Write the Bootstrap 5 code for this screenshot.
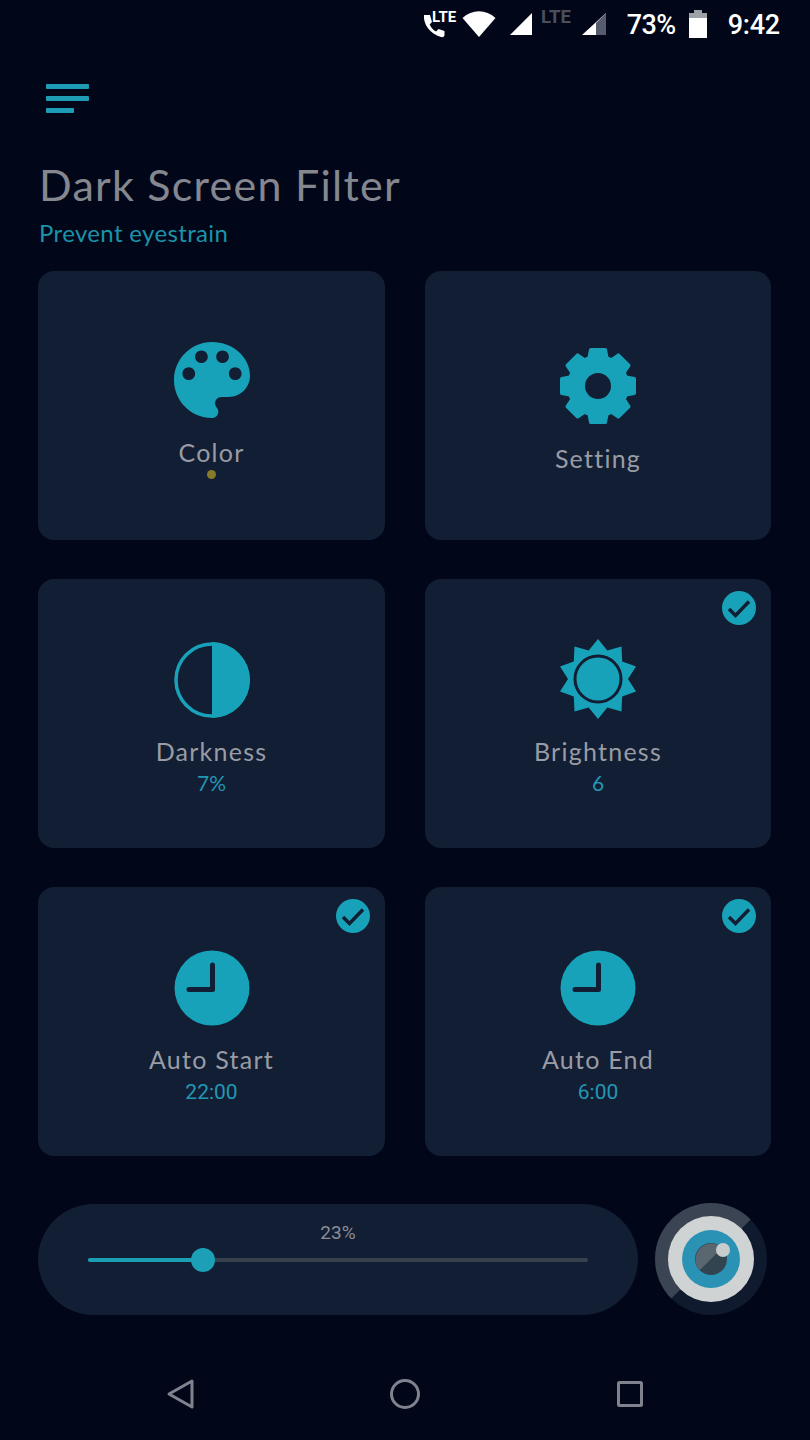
<!DOCTYPE html>
<html lang="en">
<head>
<meta charset="utf-8">
<title>Dark Screen Filter</title>
<meta name="viewport" content="width=device-width, initial-scale=1">
<link href="https://cdn.jsdelivr.net/npm/bootstrap@5.3.0/dist/css/bootstrap.min.css" rel="stylesheet">
<style>
html,body{background:#010618;margin:0;}
.phone-screen{width:810px;height:1440px;overflow:hidden;background:#010618;font-family:"Lato",sans-serif;}
.status-row{height:48px;padding-right:30px;color:#fff;font-family:"Roboto",sans-serif;}
.status-row svg{display:block;overflow:visible;}
.st-pct{font-size:27px;font-weight:500;line-height:1;margin-left:21px;margin-top:2px;letter-spacing:-.6px;}
.st-time{font-size:27px;font-weight:500;line-height:1;margin-left:21px;margin-top:2px;letter-spacing:-.2px;}
.menu-glyph{margin:36px 0 0 46px;width:43px;}
.menu-glyph span{display:block;height:5px;background:#1e9cb5;margin-bottom:7px;border-radius:1px;}
.menu-glyph span:last-child{width:28px;margin-bottom:0;}
.app-title{margin:46px 0 0 39px;font-size:43px;line-height:52px;font-weight:400;color:#85878f;letter-spacing:1.25px;}
.app-sub{margin:7px 0 0 39px;font-size:24px;line-height:30px;color:#1b93a9;letter-spacing:.35px;}
.tile-grid{display:grid;grid-template-columns:347px 346px;grid-auto-rows:268.5px;gap:39.5px 40px;margin:23px 0 0 38px;}
.tile{position:relative;background:#121e33;border-radius:16px;padding-top:5px;}
.tile svg.art{display:block;margin-bottom:24px;}
.tile:has(.tile-val) svg.art{margin-bottom:23px;}
.tile svg.art.sun-art{margin-top:-4px;margin-bottom:22px;}
.tile-label{font-size:25px;line-height:20px;color:#999ca4;letter-spacing:1.25px;}
.tile-val{font-size:21px;line-height:16px;color:#2297b3;margin-top:14px;margin-bottom:-2px;}
.tile-val.numeric{font-family:"Roboto",sans-serif;font-size:21px;margin-top:15px;margin-bottom:-3px;}
.tile-dot{width:9px;height:9px;border-radius:50%;background:#877a2b;margin-top:8px;margin-bottom:-6px;}
.tick{position:absolute;top:12px;right:15px;width:34px;height:34px;display:block;}
.slider-row{margin:48px 0 0 38px;}
.slider-pill{width:600px;height:111px;background:#121e33;border-radius:56px;padding:0 50px;}
.slider-pct{font-family:"Roboto",sans-serif;font-size:19px;line-height:22px;color:#8b8f98;text-align:center;margin-top:18px;}
.slider-track{position:relative;height:4px;background:#38424f;border-radius:2px;margin-top:14px;}
.slider-fill{height:100%;background:#1b9fb5;border-radius:2px;}
.slider-thumb{position:absolute;top:-10px;width:24px;height:24px;margin-left:-12px;border-radius:50%;background:#1ba0b8;}
.eye-btn{display:block;margin-left:17px;margin-top:-1px;}
.nav-row{margin-top:63px;padding:0 165px;}
</style>
</head>
<body>
<div class="phone-screen d-flex flex-column">
  <div class="status-row d-flex align-items-center justify-content-end">
    <svg width="38" height="32" viewBox="0 0 38 32">
      <path d="M5 7c-1 9 6 19 17 22 2 .5 3.500-.5 3.500-2v-4l-6-2-2.500 2.500c-3-1.500-5-4-6.300-7L13 14l-2-7H6.500z" fill="#fff"/>
      <text x="13" y="14" font-family="Roboto,sans-serif" font-weight="700" font-size="15" fill="#fff">LTE</text>
    </svg>
    <svg width="34" height="28" viewBox="0 0 34 28" style="margin-left:5px"><path d="M17 27 0.500 8C10-1 24-1 33.500 8z" fill="#fff"/></svg>
    <svg width="24" height="24" viewBox="0 0 24 24" style="margin-left:13px"><path d="M23 1v22H1z" fill="#fff"/></svg>
    <svg width="36" height="20" viewBox="0 0 36 20" style="margin-left:8px;margin-bottom:16px"><text x="0" y="17" font-family="Roboto,sans-serif" font-weight="700" font-size="18.500" fill="#4a4f5c">LTE</text></svg>
    <svg width="24" height="24" viewBox="0 0 24 24" style="margin-left:5px"><path d="M24 1v22H0z" fill="#fff"/><path d="M24 1v22H14V11z" fill="#565c6e"/></svg>
    <span class="st-pct">73%</span>
    <svg width="18" height="28" viewBox="0 0 18 28" style="margin-left:13px"><path d="M5 0h8v3h5v25H0V3h5z" fill="#fff"/><path d="M5 0h8v3h5v5H0V3h5z" fill="#9ea1a8"/></svg>
    <span class="st-time">9:42</span>
  </div>

  <div class="menu-glyph" aria-label="Menu"><span></span><span></span><span></span></div>
  <h1 class="app-title">Dark Screen Filter</h1>
  <p class="app-sub mb-0">Prevent eyestrain</p>

  <div class="tile-grid">
    <div class="tile d-flex flex-column align-items-center justify-content-center">
      <svg class="art" width="76" height="76" viewBox="3 3 18 18"><path fill="#18a2b9" d="M12 3c-4.970 0-9 4.030-9 9s4.030 9 9 9c.83 0 1.500-.67 1.500-1.500 0-.39-.15-.74-.39-1.010-.23-.26-.38-.61-.38-.99 0-.83.67-1.500 1.500-1.500H16c2.760 0 5-2.240 5-5 0-4.420-4.030-8-9-8zm-5.500 9c-.83 0-1.500-.67-1.500-1.500S5.670 9 6.500 9 8 9.670 8 10.500 7.330 12 6.500 12zm3-4C8.670 8 8 7.330 8 6.500S8.670 5 9.500 5s1.500.67 1.500 1.500S10.330 8 9.500 8zm5 0c-.83 0-1.500-.67-1.500-1.500S13.670 5 14.500 5s1.500.67 1.500 1.500S15.330 8 14.500 8zm3 4c-.83 0-1.500-.67-1.500-1.500S16.670 9 17.500 9s1.500.67 1.500 1.500-.67 1.500-1.500 1.500z"/></svg>
      <div class="tile-label">Color</div>
      <div class="tile-dot"></div>
    </div>
    <div class="tile d-flex flex-column align-items-center justify-content-center">
      <svg class="art" width="76" height="76" viewBox="0 0 76 76">
        <g fill="#18a2b9">
          <circle cx="38" cy="38" r="31"/>
          <path d="M29 1.500Q29 0 31 0h14q2 0 2 1.500L49 12H27zM29 74.500Q29 76 31 76h14q2 0 2-1.500L49 64H27z"/>
          <path d="M29 1.500Q29 0 31 0h14q2 0 2 1.500L49 12H27zM29 74.500Q29 76 31 76h14q2 0 2-1.500L49 64H27z" transform="rotate(45 38 38)"/>
          <path d="M29 1.500Q29 0 31 0h14q2 0 2 1.500L49 12H27zM29 74.500Q29 76 31 76h14q2 0 2-1.500L49 64H27z" transform="rotate(90 38 38)"/>
          <path d="M29 1.500Q29 0 31 0h14q2 0 2 1.500L49 12H27zM29 74.500Q29 76 31 76h14q2 0 2-1.500L49 64H27z" transform="rotate(135 38 38)"/>
        </g>
        <circle cx="38" cy="38" r="13" fill="#121e33"/>
      </svg>
      <div class="tile-label">Setting</div>
    </div>
    <div class="tile d-flex flex-column align-items-center justify-content-center">
      <svg class="art" width="76" height="76" viewBox="0 0 76 76">
        <circle cx="38" cy="38" r="36" fill="none" stroke="#18a2b9" stroke-width="3.500"/>
        <path d="M38 0a38 38 0 0 1 0 76z" fill="#18a2b9"/>
      </svg>
      <div class="tile-label">Darkness</div>
      <div class="tile-val">7%</div>
    </div>
    <div class="tile d-flex flex-column align-items-center justify-content-center">
      <svg class="tick" viewBox="0 0 34 34"><circle cx="17" cy="17" r="17" fill="#18a2b9"/><path d="M7 18l6.500 6.500L27 10.500" fill="none" stroke="#121e33" stroke-width="3.500"/></svg>
      <svg class="art sun-art" width="80" height="80" viewBox="0 0 80 80">
        <polygon fill="#18a2b9" points="40,0 49.300,11.500 63.500,7.600 64.200,22.400 78,27.600 70,40 78,52.400 64.200,57.600 63.500,72.400 49.300,68.500 40,80 30.700,68.500 16.500,72.400 15.800,57.600 2,52.400 10,40 2,27.600 15.800,22.400 16.500,7.600 30.700,11.500"/>
        <circle cx="40" cy="40" r="23" fill="#18a2b9" stroke="#121e33" stroke-width="3"/>
      </svg>
      <div class="tile-label">Brightness</div>
      <div class="tile-val">6</div>
    </div>
    <div class="tile d-flex flex-column align-items-center justify-content-center">
      <svg class="tick" viewBox="0 0 34 34"><circle cx="17" cy="17" r="17" fill="#18a2b9"/><path d="M7 18l6.500 6.500L27 10.500" fill="none" stroke="#121e33" stroke-width="3.500"/></svg>
      <svg class="art" width="76" height="76" viewBox="0 0 76 76">
        <circle cx="38" cy="38" r="37.500" fill="#18a2b9"/>
        <path d="M38.500 15v24.500H15" fill="none" stroke="#121e33" stroke-width="5" stroke-linecap="round" stroke-linejoin="round"/>
      </svg>
      <div class="tile-label">Auto Start</div>
      <div class="tile-val numeric">22:00</div>
    </div>
    <div class="tile d-flex flex-column align-items-center justify-content-center">
      <svg class="tick" viewBox="0 0 34 34"><circle cx="17" cy="17" r="17" fill="#18a2b9"/><path d="M7 18l6.500 6.500L27 10.500" fill="none" stroke="#121e33" stroke-width="3.500"/></svg>
      <svg class="art" width="76" height="76" viewBox="0 0 76 76">
        <circle cx="38" cy="38" r="37.500" fill="#18a2b9"/>
        <path d="M38.500 15v24.500H15" fill="none" stroke="#121e33" stroke-width="5" stroke-linecap="round" stroke-linejoin="round"/>
      </svg>
      <div class="tile-label">Auto End</div>
      <div class="tile-val numeric">6:00</div>
    </div>
  </div>

  <div class="slider-row d-flex align-items-center">
    <div class="slider-pill">
      <div class="slider-pct">23%</div>
      <div class="slider-track">
        <div class="slider-fill" style="width:23%"></div>
        <div class="slider-thumb" style="left:23%"></div>
      </div>
    </div>
    <svg class="eye-btn" width="112" height="112" viewBox="0 0 112 112">
      <circle cx="56" cy="56" r="56" fill="#0f1a2e"/>
      <path d="M95.600 16.400A56 56 0 0 0 16.400 95.600z" fill="#3a4452"/>
      <circle cx="56" cy="56" r="43" fill="#d0d3d3"/>
      <circle cx="56" cy="56" r="29" fill="#2a93b5"/>
      <circle cx="56" cy="56" r="16" fill="#32444f"/>
      <path d="M67.300 44.700A16 16 0 0 0 44.700 67.300z" fill="#5a6770"/>
      <circle cx="68" cy="47" r="7" fill="#c8cccc"/>
    </svg>
  </div>

  <div class="nav-row d-flex align-items-center justify-content-between">
    <svg width="30" height="32" viewBox="0 0 30 32"><path d="M27 3 4 16l23 13z" fill="none" stroke="#80838e" stroke-width="3" stroke-linejoin="round"/></svg>
    <svg width="32" height="32" viewBox="0 0 32 32"><circle cx="16" cy="16" r="13.500" fill="none" stroke="#80838e" stroke-width="3"/></svg>
    <svg width="30" height="32" viewBox="0 0 30 32"><rect x="3.500" y="4.500" width="23" height="23" rx="1" fill="none" stroke="#80838e" stroke-width="3"/></svg>
  </div>
</div>
<script src="https://cdn.jsdelivr.net/npm/bootstrap@5.3.0/dist/js/bootstrap.bundle.min.js"></script>
</body>
</html>
